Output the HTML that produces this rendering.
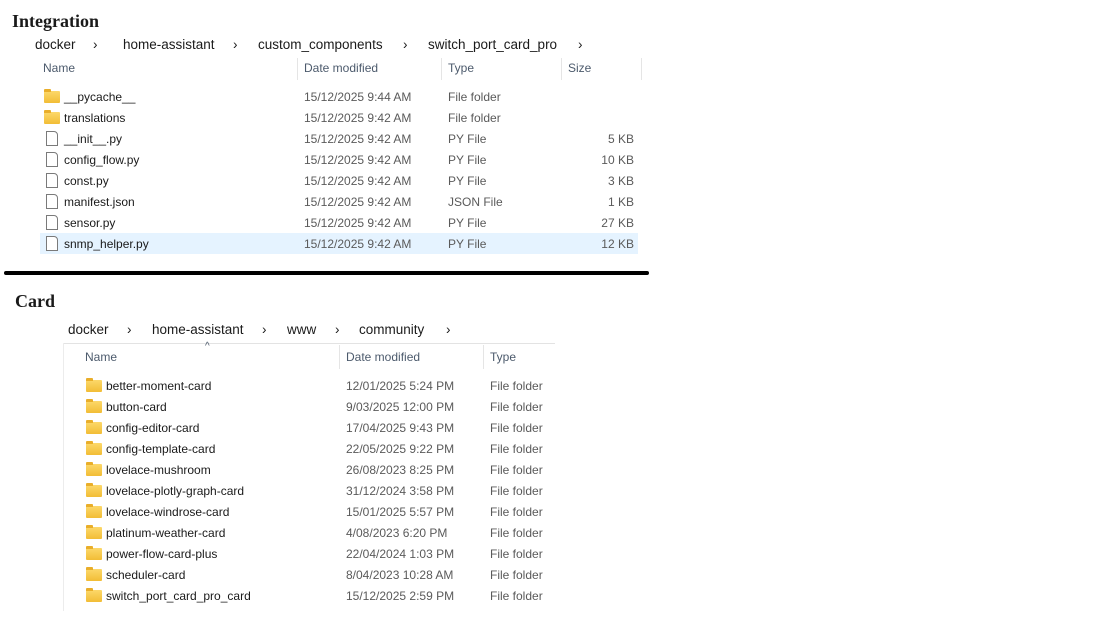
<!DOCTYPE html>
<html><head><meta charset="utf-8"><style>
*{margin:0;padding:0;box-sizing:border-box}
body{width:1113px;height:622px;background:#fff;position:relative;overflow:hidden;font-family:"Liberation Sans",sans-serif;font-size:12px;color:#1a1a1a}
.a{position:absolute;white-space:nowrap;line-height:14px}
.t{font-family:"Liberation Serif",serif;font-weight:bold;font-size:18px;line-height:20px}
.bc{font-size:13.5px;color:#1a1a1a;line-height:16px}
.h{color:#4c5a6c}
.g{color:#5a5a5a}
.sep{position:absolute;width:1px;background:#e5e5e5}
.fo{position:absolute;width:16px;height:12px;background:linear-gradient(#fcd86a,#f2bd36);border-radius:1px}
.fo:before{content:"";position:absolute;left:0;top:-2px;width:7px;height:3px;background:#e9ae2a;border-radius:1px 1px 0 0}
.fi{position:absolute;width:12px;height:15px;border:1px solid #7a7a7a;background:#fff;border-radius:0 4px 0 0}
</style></head><body>
<div class="a t" style="left:12px;top:11px">Integration</div>
<div class="a bc" style="left:35px;top:37px">docker</div>
<div class="a bc" style="left:93px;top:37px">›</div>
<div class="a bc" style="left:123px;top:37px">home-assistant</div>
<div class="a bc" style="left:233px;top:37px">›</div>
<div class="a bc" style="left:258px;top:37px">custom_components</div>
<div class="a bc" style="left:403px;top:37px">›</div>
<div class="a bc" style="left:428px;top:37px">switch_port_card_pro</div>
<div class="a bc" style="left:578px;top:37px">›</div>
<div class="a h" style="left:43px;top:61px">Name</div>
<div class="sep" style="left:297px;top:58px;height:22px"></div>
<div class="a h" style="left:304px;top:61px">Date modified</div>
<div class="sep" style="left:441px;top:58px;height:22px"></div>
<div class="a h" style="left:448px;top:61px">Type</div>
<div class="sep" style="left:561px;top:58px;height:22px"></div>
<div class="a h" style="left:568px;top:61px">Size</div>
<div class="sep" style="left:641px;top:58px;height:22px"></div>
<div style="position:absolute;left:40px;top:233px;width:598px;height:21px;background:#e5f3ff"></div>

<div class="fo" style="left:44px;top:91px"></div><div class="a" style="left:64px;top:90px">__pycache__</div><div class="a g" style="left:304px;top:90px">15/12/2025 9:44 AM</div><div class="a g" style="left:448px;top:90px">File folder</div>
<div class="fo" style="left:44px;top:112px"></div><div class="a" style="left:64px;top:111px">translations</div><div class="a g" style="left:304px;top:111px">15/12/2025 9:42 AM</div><div class="a g" style="left:448px;top:111px">File folder</div>
<div class="fi" style="left:46px;top:131px"></div><div class="a" style="left:64px;top:132px">__init__.py</div><div class="a g" style="left:304px;top:132px">15/12/2025 9:42 AM</div><div class="a g" style="left:448px;top:132px">PY File</div><div class="a g" style="left:560px;top:132px;width:74px;text-align:right">5 KB</div>
<div class="fi" style="left:46px;top:152px"></div><div class="a" style="left:64px;top:153px">config_flow.py</div><div class="a g" style="left:304px;top:153px">15/12/2025 9:42 AM</div><div class="a g" style="left:448px;top:153px">PY File</div><div class="a g" style="left:560px;top:153px;width:74px;text-align:right">10 KB</div>
<div class="fi" style="left:46px;top:173px"></div><div class="a" style="left:64px;top:174px">const.py</div><div class="a g" style="left:304px;top:174px">15/12/2025 9:42 AM</div><div class="a g" style="left:448px;top:174px">PY File</div><div class="a g" style="left:560px;top:174px;width:74px;text-align:right">3 KB</div>
<div class="fi" style="left:46px;top:194px"></div><div class="a" style="left:64px;top:195px">manifest.json</div><div class="a g" style="left:304px;top:195px">15/12/2025 9:42 AM</div><div class="a g" style="left:448px;top:195px">JSON File</div><div class="a g" style="left:560px;top:195px;width:74px;text-align:right">1 KB</div>
<div class="fi" style="left:46px;top:215px"></div><div class="a" style="left:64px;top:216px">sensor.py</div><div class="a g" style="left:304px;top:216px">15/12/2025 9:42 AM</div><div class="a g" style="left:448px;top:216px">PY File</div><div class="a g" style="left:560px;top:216px;width:74px;text-align:right">27 KB</div>
<div class="fi" style="left:46px;top:236px"></div><div class="a" style="left:64px;top:237px">snmp_helper.py</div><div class="a g" style="left:304px;top:237px">15/12/2025 9:42 AM</div><div class="a g" style="left:448px;top:237px">PY File</div><div class="a g" style="left:560px;top:237px;width:74px;text-align:right">12 KB</div>

<div style="position:absolute;left:4px;top:271px;width:645px;height:4px;background:#000;border-radius:2px"></div>

<div class="a t" style="left:15px;top:291px">Card</div>
<div class="a bc" style="left:68px;top:322px">docker</div>
<div class="a bc" style="left:127px;top:322px">›</div>
<div class="a bc" style="left:152px;top:322px">home-assistant</div>
<div class="a bc" style="left:262px;top:322px">›</div>
<div class="a bc" style="left:287px;top:322px">www</div>
<div class="a bc" style="left:335px;top:322px">›</div>
<div class="a bc" style="left:359px;top:322px">community</div>
<div class="a bc" style="left:446px;top:322px">›</div>
<div style="position:absolute;left:63px;top:343px;width:492px;height:1px;background:#e3e3e3"></div>
<div class="sep" style="left:63px;top:343px;height:268px;background:#ececec"></div>
<div class="a h" style="left:205px;top:340px;font-size:10px">^</div>
<div class="a h" style="left:85px;top:350px">Name</div>
<div class="sep" style="left:339px;top:345px;height:24px"></div>
<div class="a h" style="left:346px;top:350px">Date modified</div>
<div class="sep" style="left:483px;top:345px;height:24px"></div>
<div class="a h" style="left:490px;top:350px">Type</div>

<div class="fo" style="left:86px;top:380px"></div><div class="a" style="left:106px;top:379px">better-moment-card</div><div class="a g" style="left:346px;top:379px">12/01/2025 5:24 PM</div><div class="a g" style="left:490px;top:379px">File folder</div>
<div class="fo" style="left:86px;top:401px"></div><div class="a" style="left:106px;top:400px">button-card</div><div class="a g" style="left:346px;top:400px">9/03/2025 12:00 PM</div><div class="a g" style="left:490px;top:400px">File folder</div>
<div class="fo" style="left:86px;top:422px"></div><div class="a" style="left:106px;top:421px">config-editor-card</div><div class="a g" style="left:346px;top:421px">17/04/2025 9:43 PM</div><div class="a g" style="left:490px;top:421px">File folder</div>
<div class="fo" style="left:86px;top:443px"></div><div class="a" style="left:106px;top:442px">config-template-card</div><div class="a g" style="left:346px;top:442px">22/05/2025 9:22 PM</div><div class="a g" style="left:490px;top:442px">File folder</div>
<div class="fo" style="left:86px;top:464px"></div><div class="a" style="left:106px;top:463px">lovelace-mushroom</div><div class="a g" style="left:346px;top:463px">26/08/2023 8:25 PM</div><div class="a g" style="left:490px;top:463px">File folder</div>
<div class="fo" style="left:86px;top:485px"></div><div class="a" style="left:106px;top:484px">lovelace-plotly-graph-card</div><div class="a g" style="left:346px;top:484px">31/12/2024 3:58 PM</div><div class="a g" style="left:490px;top:484px">File folder</div>
<div class="fo" style="left:86px;top:506px"></div><div class="a" style="left:106px;top:505px">lovelace-windrose-card</div><div class="a g" style="left:346px;top:505px">15/01/2025 5:57 PM</div><div class="a g" style="left:490px;top:505px">File folder</div>
<div class="fo" style="left:86px;top:527px"></div><div class="a" style="left:106px;top:526px">platinum-weather-card</div><div class="a g" style="left:346px;top:526px">4/08/2023 6:20 PM</div><div class="a g" style="left:490px;top:526px">File folder</div>
<div class="fo" style="left:86px;top:548px"></div><div class="a" style="left:106px;top:547px">power-flow-card-plus</div><div class="a g" style="left:346px;top:547px">22/04/2024 1:03 PM</div><div class="a g" style="left:490px;top:547px">File folder</div>
<div class="fo" style="left:86px;top:569px"></div><div class="a" style="left:106px;top:568px">scheduler-card</div><div class="a g" style="left:346px;top:568px">8/04/2023 10:28 AM</div><div class="a g" style="left:490px;top:568px">File folder</div>
<div class="fo" style="left:86px;top:590px"></div><div class="a" style="left:106px;top:589px">switch_port_card_pro_card</div><div class="a g" style="left:346px;top:589px">15/12/2025 2:59 PM</div><div class="a g" style="left:490px;top:589px">File folder</div>
</body></html>
